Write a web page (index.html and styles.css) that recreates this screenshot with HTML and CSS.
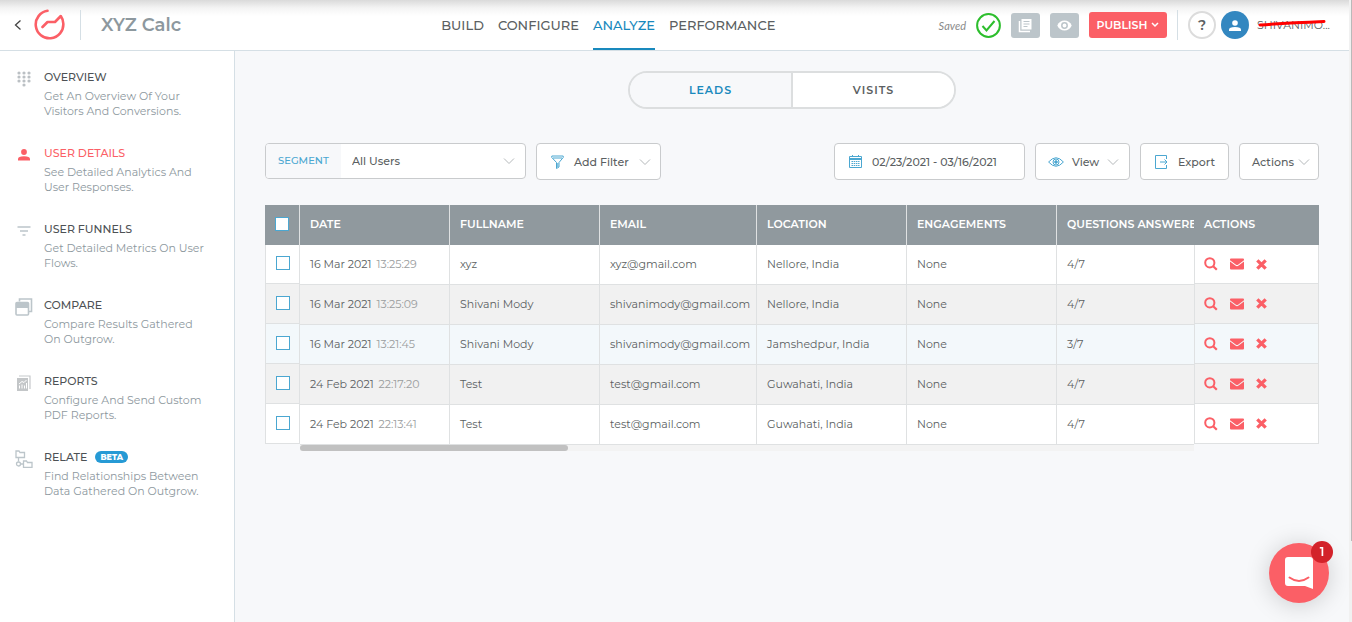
FILE: index.html
```html
<!DOCTYPE html>
<html lang="en">
  <head>
    <meta charset="UTF-8" />
    <meta name="viewport" content="width=device-width, initial-scale=1.0" />
    <title>XYZ Calc - User Details</title>
    <link rel="stylesheet" href="styles.css">
  </head>
  <body>
    <svg class="sprite" aria-hidden="true">
      <symbol id="chevron" viewBox="0 0 12 8">
        <path d="M1 1.5l5 5 5-5" fill="none" stroke="currentColor" />
      </symbol>
      <symbol id="search" viewBox="0 0 14 14">
        <circle cx="5.8" cy="5.8" r="4.6" fill="none" stroke="currentColor" stroke-width="2" />
        <path d="M9.2 9.2l3.6 3.6" stroke="currentColor" stroke-width="2.2" />
      </symbol>
      <symbol id="mail" viewBox="0 0 14 12">
        <path d="M0 1.5Q0 .5 1 .5h12q1 0 1 1v.7L8 6.7q-1 .7-2 0L0 2.2zM0 3.6l5.4 4q1.6 1.1 3.2 0l5.4-4v6.9q0 1-1 1H1q-1 0-1-1z" fill="currentColor" />
      </symbol>
      <symbol id="remove" viewBox="0 0 10 10">
        <path d="M1.2 1.2l7.6 7.6M8.8 1.2L1.2 8.8" stroke="currentColor" stroke-width="3" />
      </symbol>
    </svg>

    <div class="page">
      <header class="header">
        <div class="header-left">
          <a class="back" href="#" aria-label="Back">
            <svg width="8" height="12" viewBox="0 0 8 12"><path d="M6.5 1.5L1.5 6l5 4.5" fill="none" stroke="#444" stroke-width="1.3" /></svg>
          </a>
          <a class="logo" href="#" aria-label="Home">
            <svg width="32" height="32" viewBox="0 0 32 32" fill="none" stroke="#fb5f66" stroke-width="2.6" stroke-linecap="round" stroke-linejoin="round">
              <path d="M13.500 1.800A13.800 13.800 0 1 0 29.300 14.500Q29 10 26.800 7L21 13H13.500L8.500 18" />
            </svg>
          </a>
          <span class="divider"></span>
          <h1 class="title">XYZ Calc</h1>
        </div>
        <nav class="nav">
          <a href="#">BUILD</a>
          <a href="#">CONFIGURE</a>
          <a class="active" href="#">ANALYZE</a>
          <a href="#">PERFORMANCE</a>
        </nav>
        <div class="header-right">
          <span class="saved">Saved</span>
          <svg width="25" height="25" viewBox="0 0 25 25" fill="none" stroke="#2dbe2d" stroke-width="2">
            <circle cx="12.5" cy="12.5" r="11.4" />
            <path d="M6.5 13l4 4.5L18.5 8" />
          </svg>
          <button class="icon-btn" aria-label="Copy">
            <svg width="15" height="15" viewBox="0 0 15 15">
              <path d="M1.5 3v10.5H12" fill="none" stroke="#fff" stroke-width="1.5" />
              <path d="M3.5 1h10v10.5h-10z" fill="#fff" />
              <path d="M5.5 3.5h6M5.5 6h6M5.5 8.5h4" stroke="#bcc5ca" />
            </svg>
          </button>
          <button class="icon-btn" aria-label="Preview">
            <svg width="15" height="11" viewBox="0 0 15 11">
              <path d="M.3 5.5C3-1.2 12-1.2 14.7 5.5 12 12.2 3 12.2.3 5.5z" fill="#fff" />
              <circle cx="7.5" cy="5.5" r="2.7" fill="#fff" stroke="#bcc5ca" stroke-width="1.5" />
            </svg>
          </button>
          <button class="publish">PUBLISH
            <svg width="8" height="6" viewBox="0 0 8 6"><path d="M1 1l3 3 3-3" fill="none" stroke="#fff" stroke-width="1.5" /></svg>
          </button>
          <span class="divider"></span>
          <div class="account">
            <button class="help">?</button>
            <a class="avatar" href="#" aria-label="Account">
              <svg width="12" height="11" viewBox="0 0 12 11" fill="#fff"><circle cx="6" cy="3" r="2.8" /><path d="M0 11V9.5Q0 7 6 7t6 2.5V11z" /></svg>
            </a>
            <div class="user">
              <span class="user-name">SHIVANIMO...</span>
              <svg class="strike" width="70" height="8" viewBox="0 0 70 8"><path d="M3 6Q30 4 67 2.5" fill="none" stroke="#f00" stroke-width="3" stroke-linecap="round" /></svg>
            </div>
          </div>
        </div>
      </header>

      <div class="body">
        <aside class="sidebar">
          <a class="menu-item" href="#">
            <span class="menu-icon">
              <svg width="14" height="16" viewBox="0 0 14 16" stroke="#bbc0c4" stroke-width="3.2" stroke-linecap="round">
                <path d="M2 2h0M7 2h0M12 2h0M2 6h0M7 6h0M12 6h0M2 10h0M7 10h0M12 10h0M7 14h0" />
              </svg>
            </span>
            <span class="menu-text"><strong>OVERVIEW</strong>Get An Overview Of Your Visitors And Conversions.</span>
          </a>
          <a class="menu-item active" href="#">
            <span class="menu-icon">
              <svg width="12" height="12" viewBox="0 0 12 12" fill="#fb5f66"><circle cx="6" cy="3" r="2.9" /><path d="M0 11.5V10Q0 7.3 6 7.3T12 10v1.5z" /></svg>
            </span>
            <span class="menu-text"><strong>USER DETAILS</strong>See Detailed Analytics And User Responses.</span>
          </a>
          <a class="menu-item" href="#">
            <span class="menu-icon">
              <svg width="14" height="12" viewBox="0 0 14 12" stroke="#bcc5ca" stroke-width="1.6"><path d="M.5 2h13M3 6h8M5.5 10h3" /></svg>
            </span>
            <span class="menu-text"><strong>USER FUNNELS</strong>Get Detailed Metrics On User Flows.</span>
          </a>
          <a class="menu-item" href="#">
            <span class="menu-icon">
              <svg width="18" height="18" viewBox="0 0 18 18" fill="none" stroke="#bcc5ca" stroke-width="1.6">
                <path d="M4.5 3.5V1h12v12.5H14" /><rect x="1" y="4.5" width="12.5" height="12.5" rx="1" /><path d="M1 7.5h12.5" stroke-width="5" />
              </svg>
            </span>
            <span class="menu-text"><strong>COMPARE</strong>Compare Results Gathered On Outgrow.</span>
          </a>
          <a class="menu-item" href="#">
            <span class="menu-icon">
              <svg width="14" height="16" viewBox="0 0 14 16">
                <path d="M2 1h11v13" fill="none" stroke="#c6c9cb" stroke-width="1.2" />
                <path d="M0 3h11v13H0z" fill="#c3c6c8" />
                <path d="M2.5 13.5v-3M5 13.5v-4M7.5 13.5v-3M9.5 13.5V8M2 9l3-2.5 2 1L9.5 5" fill="none" stroke="#fff" />
              </svg>
            </span>
            <span class="menu-text"><strong>REPORTS</strong>Configure And Send Custom PDF Reports.</span>
          </a>
          <a class="menu-item" href="#">
            <span class="menu-icon">
              <svg width="18" height="18" viewBox="0 0 18 18" fill="none" stroke="#bcc5ca" stroke-width="1.3">
                <path d="M1 1h3l1 1.5h4.5v5H1zM8.5 11h3l1 1.5H17v5H8.5zM3.5 7.5v4M5.5 14h3" /><circle cx="3.5" cy="14" r="2" />
              </svg>
            </span>
            <span class="menu-text"><strong>RELATE <em class="beta">BETA</em></strong>Find Relationships Between Data Gathered On Outgrow.</span>
          </a>
        </aside>

        <main class="main">
          <div class="tabs">
            <button class="tab active">LEADS</button>
            <button class="tab">VISITS</button>
          </div>

          <div class="toolbar">
            <div class="segment">
              <label for="segment">SEGMENT</label>
              <div class="select">
                <select id="segment"><option>All Users</option></select>
                <svg class="chevron" width="12" height="8"><use href="#chevron" /></svg>
              </div>
            </div>
            <button class="box filter">
              <svg width="13" height="14" viewBox="0 0 13 14" fill="none" stroke="#4ba7d1"><path d="M.8 1h11.4v1.5L8 7.5V12l-2.5 1.5v-6L.8 2.5zM2 3h9M6.8 8v4" /></svg>
              Add Filter
              <svg class="chevron" width="12" height="8"><use href="#chevron" /></svg>
            </button>
            <button class="box date">
              <svg width="13" height="13" viewBox="0 0 13 13" fill="none" stroke="#4ba7d1"><path d="M.5 1.5h12v11H.5zM.5 4.5h12M.5 3.5h12M3.5 0v2M9.5 0v2" /><path d="M2.5 6.5h8M2.5 8.5h8M2.5 10.5h8" stroke-dasharray="1.5 .7" /></svg>
              02/23/2021 - 03/16/2021
            </button>
            <button class="box view">
              <svg width="16" height="10" viewBox="0 0 16 10" fill="none" stroke="#4ba7d1"><path d="M.6 5Q8-3.5 15.4 5 8 13.5.6 5z" /><circle cx="8" cy="5" r="3" /><circle cx="8" cy="5" r="1.3" fill="#4ba7d1" /></svg>
              View
              <svg class="chevron" width="12" height="8"><use href="#chevron" /></svg>
            </button>
            <button class="box export">
              <svg width="13" height="14" viewBox="0 0 13 14" fill="none" stroke="#4ba7d1"><path d="M11.5 4V.5H.5v13h11V10M5 7h7M9.5 4.5L12 7l-2.5 2.5" /></svg>
              Export
            </button>
            <button class="box actions">
              Actions
              <svg class="chevron" width="12" height="8"><use href="#chevron" /></svg>
            </button>
          </div>

          <div class="grid">
            <table class="table check-table">
              <thead><tr><th><input type="checkbox" aria-label="Select all" /></th></tr></thead>
              <tbody>
                <tr><td><input type="checkbox" aria-label="Select row 1" /></td></tr>
                <tr><td><input type="checkbox" aria-label="Select row 2" /></td></tr>
                <tr><td><input type="checkbox" aria-label="Select row 3" /></td></tr>
                <tr><td><input type="checkbox" aria-label="Select row 4" /></td></tr>
                <tr><td><input type="checkbox" aria-label="Select row 5" /></td></tr>
              </tbody>
            </table>

            <div class="scroller">
              <table class="table data-table">
                <colgroup>
                  <col class="col" />
                  <col class="col" />
                  <col class="col-wide" />
                  <col class="col" />
                  <col class="col" />
                  <col />
                </colgroup>
                <thead>
                  <tr>
                    <th>DATE</th>
                    <th>FULLNAME</th>
                    <th>EMAIL</th>
                    <th>LOCATION</th>
                    <th>ENGAGEMENTS</th>
                    <th>QUESTIONS ANSWERE</th>
                  </tr>
                </thead>
                <tbody>
                  <tr><td>16 Mar 2021 <time>13:25:29</time></td><td>xyz</td><td>xyz@gmail.com</td><td>Nellore, India</td><td>None</td><td>4/7</td></tr>
                  <tr><td>16 Mar 2021 <time>13:25:09</time></td><td>Shivani Mody</td><td>shivanimody@gmail.com</td><td>Nellore, India</td><td>None</td><td>4/7</td></tr>
                  <tr><td>16 Mar 2021 <time>13:21:45</time></td><td>Shivani Mody</td><td>shivanimody@gmail.com</td><td>Jamshedpur, India</td><td>None</td><td>3/7</td></tr>
                  <tr><td>24 Feb 2021 <time>22:17:20</time></td><td>Test</td><td>test@gmail.com</td><td>Guwahati, India</td><td>None</td><td>4/7</td></tr>
                  <tr><td>24 Feb 2021 <time>22:13:41</time></td><td>Test</td><td>test@gmail.com</td><td>Guwahati, India</td><td>None</td><td>4/7</td></tr>
                </tbody>
              </table>
              <div class="scroll-track"><div class="scroll-thumb"></div></div>
            </div>

            <table class="table action-table">
              <thead><tr><th>ACTIONS</th></tr></thead>
              <tbody>
                <tr><td><div class="row-actions">
                  <button aria-label="View"><svg width="14" height="14"><use href="#search" /></svg></button>
                  <button aria-label="Mail"><svg width="14" height="12"><use href="#mail" /></svg></button>
                  <button aria-label="Delete"><svg width="11" height="11"><use href="#remove" /></svg></button>
                </div></td></tr>
                <tr><td><div class="row-actions">
                  <button aria-label="View"><svg width="14" height="14"><use href="#search" /></svg></button>
                  <button aria-label="Mail"><svg width="14" height="12"><use href="#mail" /></svg></button>
                  <button aria-label="Delete"><svg width="11" height="11"><use href="#remove" /></svg></button>
                </div></td></tr>
                <tr><td><div class="row-actions">
                  <button aria-label="View"><svg width="14" height="14"><use href="#search" /></svg></button>
                  <button aria-label="Mail"><svg width="14" height="12"><use href="#mail" /></svg></button>
                  <button aria-label="Delete"><svg width="11" height="11"><use href="#remove" /></svg></button>
                </div></td></tr>
                <tr><td><div class="row-actions">
                  <button aria-label="View"><svg width="14" height="14"><use href="#search" /></svg></button>
                  <button aria-label="Mail"><svg width="14" height="12"><use href="#mail" /></svg></button>
                  <button aria-label="Delete"><svg width="11" height="11"><use href="#remove" /></svg></button>
                </div></td></tr>
                <tr><td><div class="row-actions">
                  <button aria-label="View"><svg width="14" height="14"><use href="#search" /></svg></button>
                  <button aria-label="Mail"><svg width="14" height="12"><use href="#mail" /></svg></button>
                  <button aria-label="Delete"><svg width="11" height="11"><use href="#remove" /></svg></button>
                </div></td></tr>
              </tbody>
            </table>
          </div>
        </main>
      </div>
    </div>
    <div class="page-scroll"><div class="page-thumb"></div></div>

    <button class="chat" aria-label="Open chat">
      <svg width="28" height="32" viewBox="0 0 28 32">
        <path d="M3 0h22q3 0 3 3v29l-8-3H3q-3 0-3-3V3q0-3 3-3z" fill="#fff" />
        <path d="M4.5 20.5q9.5 7 19 0" fill="none" stroke="#fb5f66" stroke-width="2" stroke-linecap="round" />
      </svg>
      <span class="badge">1</span>
    </button>
  </body>
</html>
```
FILE: styles.css
```css
* {
  box-sizing: border-box;
}

body {
  margin: 0;
  min-height: 100vh;
  display: flex;
  font-family: Montserrat, Inter, sans-serif;
  font-size: 12px;
  color: #5b5f62;
  background: #f7f8fa;
}

a {
  color: inherit;
  text-decoration: none;
}

button,
select {
  font: inherit;
  color: inherit;
  padding: 0;
  border: none;
  background: none;
  cursor: pointer;
}

svg {
  display: block;
  flex: none;
}

.sprite {
  position: absolute;
  width: 0;
  height: 0;
}

.page {
  flex: 1;
  min-width: 0;
  display: flex;
  flex-direction: column;
}

/* header */
.header {
  display: grid;
  grid-template-columns: 10fr auto 13fr;
  height: 51px;
  border-bottom: 1px solid #d5dfe5;
  background: linear-gradient(#dadada, #f4f4f4 8px, #fff 16px);
}

.header-left,
.header-right,
.account {
  display: flex;
  align-items: center;
}

.header-left {
  padding-left: 14px;
}

.logo {
  margin: 0 14px 0 12px;
}

.divider {
  width: 1px;
  height: 30px;
  background: #d5dfe5;
}

.title {
  margin: 0 0 0 20px;
  font-size: 18px;
  font-weight: 600;
  color: #8d989e;
}

.nav {
  display: flex;
  gap: 14px;
}

.nav a {
  display: flex;
  align-items: center;
  padding-top: 2px;
  font-size: 13px;
  font-weight: 500;
  border-bottom: 2px solid transparent;
}

.nav .active {
  color: #1989bd;
  border-color: #1989bd;
}

.header-right {
  justify-content: flex-end;
  gap: 10px;
  padding-right: 20px;
}

.saved {
  font: italic 11px Lato, sans-serif;
  color: #8a8a8a;
}

.icon-btn {
  display: grid;
  place-items: center;
  width: 29px;
  height: 25px;
  border-radius: 3px;
  background: #bcc5ca;
}

.publish {
  display: flex;
  align-items: center;
  justify-content: center;
  gap: 4px;
  width: 78px;
  height: 26px;
  border-radius: 3px;
  font-size: 11px;
  font-weight: 600;
  color: #fff;
  background: #fb5f66;
}

.help,
.avatar {
  display: grid;
  place-items: center;
  width: 28px;
  height: 28px;
  border-radius: 50%;
}

.help {
  border: 2px solid #dcdcdc;
  font-size: 14px;
  font-weight: 600;
  background: #fff;
}

.avatar {
  margin: 0 8px 0 5px;
  background: #3387c0;
}

.user {
  position: relative;
  width: 72px;
  font-size: 11px;
}

.strike {
  position: absolute;
  top: 1px;
  left: 0;
}

/* sidebar */
.body {
  flex: 1;
  display: flex;
}

.sidebar {
  flex: none;
  width: 235px;
  padding: 17px 26px 17px 15px;
  border-right: 1px solid #d5dfe5;
  background: #fff;
}

.menu-item {
  display: flex;
  gap: 11px;
  padding-bottom: 25px;
}

.menu-icon {
  display: grid;
  place-items: center;
  width: 18px;
  height: 21px;
}

.menu-text {
  flex: 1;
  font-size: 11px;
  line-height: 15px;
  color: #8d989e;
}

.menu-text strong {
  display: flex;
  align-items: center;
  gap: 8px;
  height: 18px;
  margin-bottom: 3px;
  font-weight: 500;
  color: #4d5154;
}

.menu-item.active strong {
  color: #fb5f66;
}

.beta {
  padding: 0 5px;
  border-radius: 6px;
  font-size: 8px;
  font-style: normal;
  font-weight: 800;
  line-height: 12px;
  color: #fff;
  background: #269ad5;
}

/* content */
.main {
  flex: 1;
  min-width: 0;
  padding: 20px 30px;
}

.tabs {
  display: flex;
  width: 328px;
  height: 38px;
  margin: 0 auto 34px;
  border: 2px solid #dcdedf;
  border-radius: 19px;
  overflow: hidden;
}

.tab {
  flex: 1;
  font-size: 11px;
  font-weight: 600;
  letter-spacing: 1px;
  background: #fff;
}

.tab.active {
  color: #1989bd;
  background: #f7f8fa;
  border-right: 2px solid #dcdedf;
}

.toolbar {
  display: flex;
  align-items: flex-start;
  gap: 10px;
  margin-bottom: 25px;
  font-size: 11px;
  font-weight: 500;
}

.segment {
  display: flex;
  width: 261px;
  height: 36px;
  border: 1px solid #c9cbcd;
  border-radius: 4px;
  background: #fff;
  overflow: hidden;
}

.segment label {
  padding: 0 12px;
  font-size: 10px;
  line-height: 34px;
  color: #4ba7d1;
  background: #f7f8fa;
}

.select {
  flex: 1;
  display: grid;
  align-items: center;
}

.select select,
.select svg {
  grid-area: 1 / 1;
}

.select select {
  height: 100%;
  padding: 0 11px;
  appearance: none;
  outline: none;
}

.select svg {
  justify-self: end;
  margin-right: 10px;
  pointer-events: none;
}

.chevron {
  color: #b4b8ba;
}

.box {
  display: flex;
  align-items: center;
  height: 37px;
  padding: 0 12px;
  border: 1px solid #c9cbcd;
  border-radius: 4px;
  background: #fff;
  white-space: nowrap;
}

.filter {
  width: 125px;
  gap: 10px;
  padding: 0 14px;
}

.date {
  width: 191px;
  gap: 10px;
  margin-left: auto;
  padding: 0 14px;
}

.view {
  width: 95px;
  gap: 8px;
}

.export {
  width: 89px;
  gap: 10px;
  padding: 0 14px;
}

.actions {
  width: 80px;
  gap: 4px;
}

/* leads grid */
.grid {
  display: flex;
  align-items: flex-start;
}

.table {
  border-collapse: separate;
  border-spacing: 0;
  table-layout: fixed;
}

.table th {
  height: 40px;
  padding: 0 10px 2px;
  text-align: left;
  font-size: 11px;
  font-weight: 600;
  color: #fff;
  background: #90999e;
  white-space: nowrap;
}

.table td {
  height: 40px;
  padding: 0 10px 2px;
  font-size: 11px;
  background: #fff;
  border-bottom: 1px solid #dfe1e2;
  white-space: nowrap;
}

.table tr:nth-child(even) td {
  background: #f1f1f1;
}

.table tbody tr:nth-child(3) td {
  background: #f3f8fb;
}

.check-table {
  flex: none;
  width: 35px;
}

.table.check-table th,
.table.check-table td {
  padding: 0 0 2px;
  border-right: 1px solid #dfe1e2;
}

.check-table td {
  border-left: 1px solid #dfe1e2;
}

.check-table tbody tr:first-child td,
.action-table tbody tr:first-child td {
  height: 39px;
}

.check-table input {
  display: block;
  width: 14px;
  height: 14px;
  margin: 0 auto;
  appearance: none;
  border: 1px solid #4ba7d1;
  background: #fff;
}

.scroller {
  flex: 1;
  min-width: 0;
  overflow: hidden;
}

.data-table {
  width: 100%;
  min-width: 893px;
}

.col {
  width: 150px;
}

.col-wide {
  width: 157px;
}

.data-table th,
.data-table td {
  border-right: 1px solid #dfe1e2;
}

.data-table th:last-child,
.data-table td:last-child {
  padding-right: 0;
  border-right: none;
}

.data-table time {
  margin-left: 2px;
  color: #9a9d9e;
}

.scroll-track {
  height: 6px;
  background: #f3f3f3;
}

.scroll-thumb {
  width: 30%;
  height: 6px;
  border-radius: 3px;
  background: #c1c1c1;
}

.action-table {
  flex: none;
  width: 125px;
}

.action-table td {
  padding: 0 9px;
  border-left: 1px solid #dfe1e2;
  border-right: 1px solid #dfe1e2;
}

.row-actions {
  display: flex;
  align-items: center;
  gap: 12px;
  color: #fb5f66;
}

.page-scroll {
  flex: none;
  width: 3px;
  background: #f1f1f1;
}

.page-thumb {
  width: 1px;
  height: 87vh;
  margin-left: auto;
  background: #b9b9b9;
}

/* chat launcher */
.chat {
  position: fixed;
  right: 23px;
  bottom: 19px;
  display: grid;
  place-items: center;
  width: 60px;
  height: 60px;
  border-radius: 50%;
  background: #fb5f66;
  box-shadow: 0 2px 24px rgba(0, 0, 0, 0.18);
}

.badge {
  position: absolute;
  top: -2px;
  right: -4px;
  width: 22px;
  border-radius: 50%;
  font-weight: 600;
  line-height: 22px;
  color: #fff;
  background: #d3222a;
}
```
